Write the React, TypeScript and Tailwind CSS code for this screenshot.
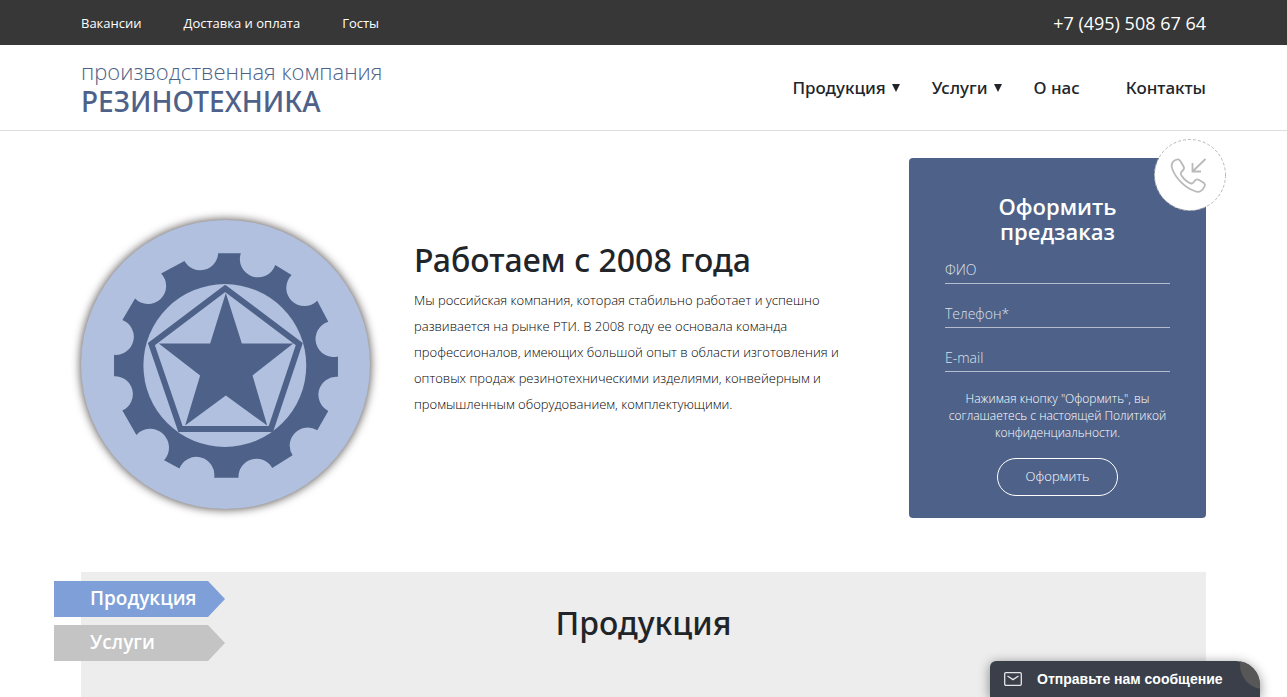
import React from "react";

const GEAR =
  "M443 146H511A54 54 0 0 0 614 181L663 211A54 54 0 0 0 740 288L773 351A54 54 0 0 0 802 455V516A54 54 0 0 0 773 618L740 676A54 54 0 0 0 666 751L605 789A54 54 0 0 0 504 818H431A54 54 0 0 0 327 791L281 766A54 54 0 0 0 198 690L156 617A54 54 0 0 0 131 514V450A54 54 0 0 0 156 346L194 281A54 54 0 0 0 272 206L342 169A54 54 0 0 0 443 146Z";

function Emblem() {
  return (
    <svg
      viewBox="32 46 866 866"
      role="img"
      aria-label="Резинотехника"
      className="mt-[62px] w-full rounded-full bg-[#b0c0de] shadow-[0_0_8px_1px_rgba(50,40,40,0.75)]"
    >
      <path d={GEAR} fill="#4e6289" />
      <circle cx="463" cy="482" r="244" fill="#b0c0de" />
      <path
        d="M464 251L686 418L601 672H330L243 418Z"
        fill="none"
        stroke="#4e6289"
        strokeWidth="18"
      />
      <path
        d="M466 265L514 416H668L546 512L590 662L466 572L344 662L389 512L265 416H419Z"
        fill="#4e6289"
      />
    </svg>
  );
}

function CallBadge() {
  return (
    <svg viewBox="0 0 72 72" aria-hidden="true" className="absolute -top-[19px] -right-5 size-[72px]">
      <circle cx="36" cy="36" r="35.5" fill="#fff" stroke="#b9b9b9" strokeDasharray="3 2" />
      <g fill="none" stroke="#b9b9b9" strokeWidth="1.8" strokeLinecap="round" strokeLinejoin="round">
        <path d="M20.500 21.500L23 20.500Q25 20 26.300 22L29.600 27.500Q30.700 29.800 28.800 31.500L27.300 33Q26.200 34.300 27.300 36.200Q31 42 36.500 44.300Q38.300 44.900 39.400 43.500L41 41.500Q42.500 39.700 44.700 40.700L50 44Q51.600 45.300 50.700 47.200Q49 51 46.500 52.300Q44 53.400 40.500 52C31 48.500 22 39.500 18.500 30.500C16.700 26 17.800 23.300 20.500 21.500Z" />
        <path d="M51.500 20L38.500 32.500M38.500 24V32.500H47" strokeLinecap="butt" strokeLinejoin="miter" />
      </g>
    </svg>
  );
}

function Caret() {
  return (
    <svg viewBox="0 0 8 8" aria-hidden="true" className="size-2" fill="currentColor">
      <path d="M0 0H8L4 8Z" />
    </svg>
  );
}

const fields = [
  { id: "name", label: "ФИО", type: "text" },
  { id: "phone", label: "Телефон*", type: "tel" },
  { id: "email", label: "E-mail", type: "email" },
];

function OrderForm() {
  return (
    <form
      onSubmit={(e) => e.preventDefault()}
      className="relative flex flex-col items-center rounded bg-[#4e6289] px-9 pt-9 pb-[22px] text-white"
    >
      <CallBadge />
      <h2 className="text-center text-[22px] leading-[25px] font-semibold">
        Оформить
        <br />
        предзаказ
      </h2>
      <div className="mt-3 flex w-full flex-col gap-4">
        {fields.map((f) => (
          <input
            key={f.id}
            id={f.id}
            type={f.type}
            aria-label={f.label}
            placeholder={f.label}
            className="h-7 w-full border-b border-[#b4bccd] bg-transparent text-sm font-light outline-none placeholder:text-[#dde1e9]"
          />
        ))}
      </div>
      <p className="mt-[18px] text-center text-xs leading-[17px] font-light">
        Нажимая кнопку "Оформить", вы соглашаетесь с настоящей Политикой конфиденциальности.
      </p>
      <button type="submit" className="mt-[17px] h-[38px] w-[121px] rounded-full border border-white text-[13px] font-light">
        Оформить
      </button>
    </form>
  );
}

export default function App() {
  return (
    <div className="flex min-h-screen flex-col bg-white font-['Open_Sans',sans-serif] text-[#212529]">
      <div className="bg-[#373737] text-white">
        <div className="mx-auto flex h-[45px] max-w-[1125px] items-center justify-between">
          <nav className="flex gap-[42px] pt-0.5 text-[13px]">
            <a href="#jobs">Вакансии</a>
            <a href="#delivery">Доставка и оплата</a>
            <a href="#standards">Госты</a>
          </nav>
          <a href="tel:+74955086764" className="text-lg">+7 (495) 508 67 64</a>
        </div>
      </div>
      <header className="border-b border-[#dedede]">
        <div className="mx-auto flex h-[85px] max-w-[1125px] items-center justify-between">
          <a href="#home" className="flex flex-col pb-0.5 text-[#4e6289]">
            <span className="text-[22px] leading-7 font-light">производственная компания</span>
            <span className="font-['Noto_Sans',sans-serif] text-[28px] leading-8 font-medium">РЕЗИНОТЕХНИКА</span>
          </a>
          <nav className="flex font-['Noto_Sans',sans-serif] text-[17px] font-medium">
            <a href="#products" className="mr-8 flex items-center gap-[6px]">
              Продукция <Caret />
            </a>
            <a href="#services" className="mr-8 flex items-center gap-[6px]">
              Услуги <Caret />
            </a>
            <a href="#about" className="mr-[46px]">О нас</a>
            <a href="#contacts">Контакты</a>
          </nav>
        </div>
      </header>
      <main className="mx-auto flex w-full max-w-[1125px] flex-1 flex-col">
        <section className="grid grid-cols-[289px_1fr_297px] items-start gap-11 pt-[27px] pb-[54px]">
          <Emblem />
          <div className="mt-[82px]">
            <h1 className="font-['Noto_Sans',sans-serif] text-[32px] leading-10 font-medium">Работаем с 2008 года</h1>
            <p className="mt-[7px] text-[13px] leading-[26px] font-light text-black">
              Мы российская компания, которая стабильно работает и успешно развивается на рынке РТИ. В 2008
              году ее основала команда профессионалов, имеющих большой опыт в области изготовления и оптовых
              продаж резинотехническими изделиями, конвейерным и промышленным оборудованием, комплектующими.
            </p>
          </div>
          <OrderForm />
        </section>
        <section id="products" className="relative flex-1 bg-[#ededed] pt-[31px]">
          <h2 className="text-center font-['Noto_Sans',sans-serif] text-[32px] leading-10 font-medium">Продукция</h2>
          <nav className="absolute top-[9px] -left-[27px] flex w-[171px] flex-col gap-2 text-[19px] leading-[34px] font-semibold text-white">
            <a
              href="#products"
              className="bg-[#7f9fd9] pb-[2px] pl-9 [clip-path:polygon(0_0,154px_0,100%_50%,154px_100%,0_100%)]"
            >
              Продукция
            </a>
            <a
              href="#services"
              className="bg-[#c4c4c4] pb-[2px] pl-9 [clip-path:polygon(0_0,154px_0,100%_50%,154px_100%,0_100%)]"
            >
              Услуги
            </a>
          </nav>
        </section>
      </main>
      <div className="fixed right-[27px] bottom-0 rounded-tl-md rounded-tr-3xl shadow-[0_2px_12px_rgba(0,0,0,0.45)]">
        <button
          type="button"
          className="relative flex h-9 w-[270px] items-center gap-[15px] overflow-hidden rounded-tl-md rounded-tr-3xl bg-[#3a3f49] pl-[14px] font-['Liberation_Sans',sans-serif] text-sm font-bold text-white"
        >
          <svg viewBox="0 0 18 14" className="h-[14px] w-[18px]" fill="none" stroke="#e6e7e9" strokeWidth="1.3" aria-hidden="true">
            <rect x="0.700" y="0.700" width="16.600" height="12.600" rx="1.200" />
            <path d="M3.500 4L9 7.600L14.500 4" />
          </svg>
          Отправьте нам сообщение
          <span className="absolute -top-5 -right-7 size-12 rounded-full bg-[#575757]" />
        </button>
      </div>
    </div>
  );
}
